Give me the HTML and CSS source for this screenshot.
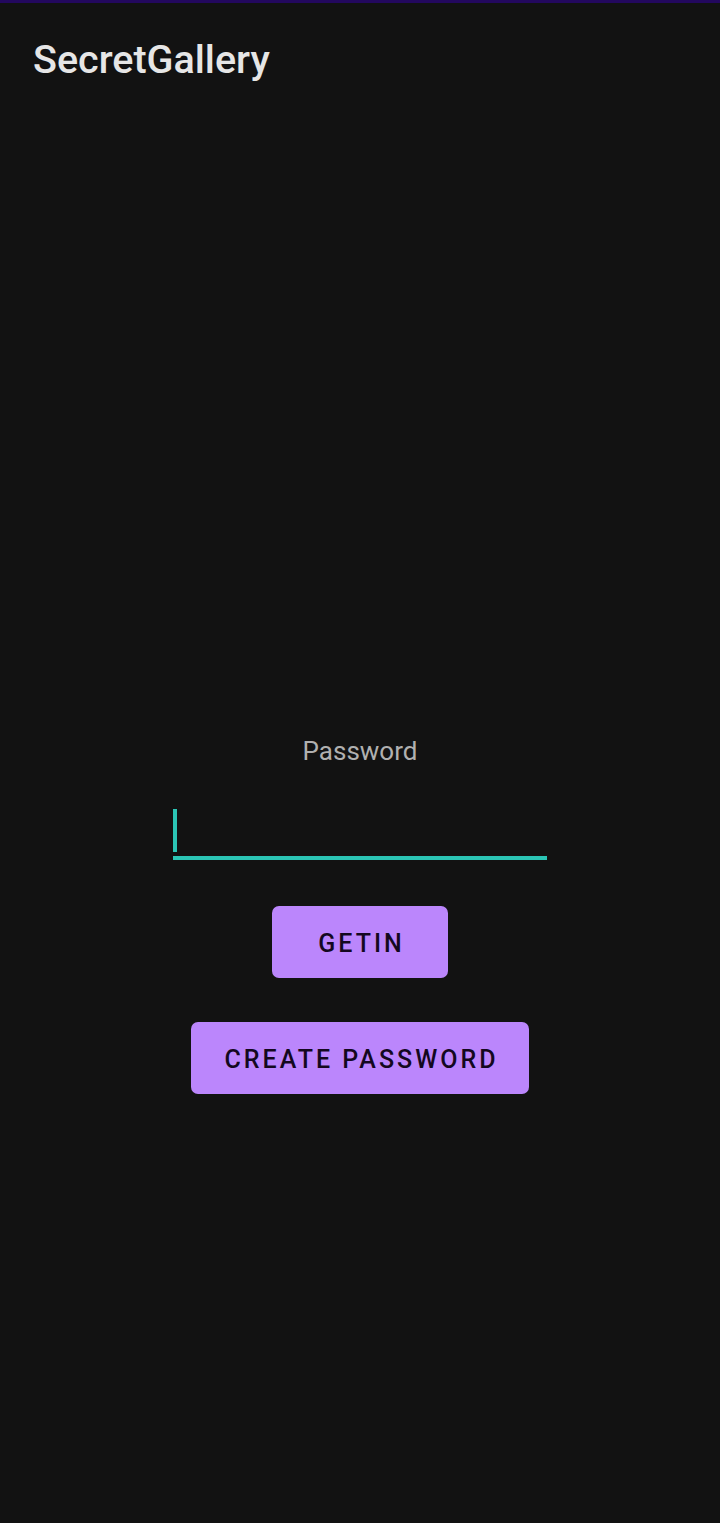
FILE: index.html
```html
<!DOCTYPE html>
<html>
<head>
<meta charset="utf-8">
<link rel="stylesheet" href="styles.css">
</head>
<body>
<div class="status"></div>
<header class="appbar"><h1 class="title">SecretGallery</h1></header>
<main class="content">
  <div class="label">Password</div>
  <div class="field"><span class="cursor"></span></div>
  <button class="btn btn-getin">GETIN</button>
  <button class="btn btn-create">CREATE PASSWORD</button>
</main>
</body>
</html>
```

FILE: styles.css
```css
html, body {
  margin: 0;
  padding: 0;
  background: #121212;
  height: 100%;
}
body {
  width: 720px;
  height: 1523px;
  font-family: Roboto, "Noto Sans", sans-serif;
  display: flex;
  flex-direction: column;
}
.status {
  height: 3px;
  background: #23085e;
}
.appbar {
  height: 113px;
  display: flex;
  align-items: flex-start;
  padding-left: 33px;
}
.title {
  margin: 33px 0 0 0;
  font-size: 39.5px;
  font-weight: 500;
  color: #e6e6e6;
  line-height: 48px;
}
.content {
  display: flex;
  flex-direction: column;
  align-items: center;
  padding-top: 620px;
}
.label {
  font-size: 26px;
  color: #b0b0b0;
  line-height: 30px;
}
.field {
  margin-top: 39px;
  width: 374px;
  height: 51px;
  border-bottom: 4px solid #2bc5b5;
  box-sizing: content-box;
  display: flex;
  align-items: flex-end;
}
.cursor {
  width: 4px;
  height: 43px;
  background: #2bc5b5;
  margin-bottom: 4px;
}
.btn {
  border: none;
  background: #bb86fc;
  color: #14081f;
  font-family: Roboto, "Noto Sans", sans-serif;
  font-weight: 500;
  font-size: 25px;
  letter-spacing: 3px;
  height: 72px;
  border-radius: 7px;
  padding: 2px 0 0 3px;
}
.btn-getin {
  margin-top: 46px;
  width: 176px;
}
.btn-create {
  margin-top: 44px;
  width: 338px;
}
```
